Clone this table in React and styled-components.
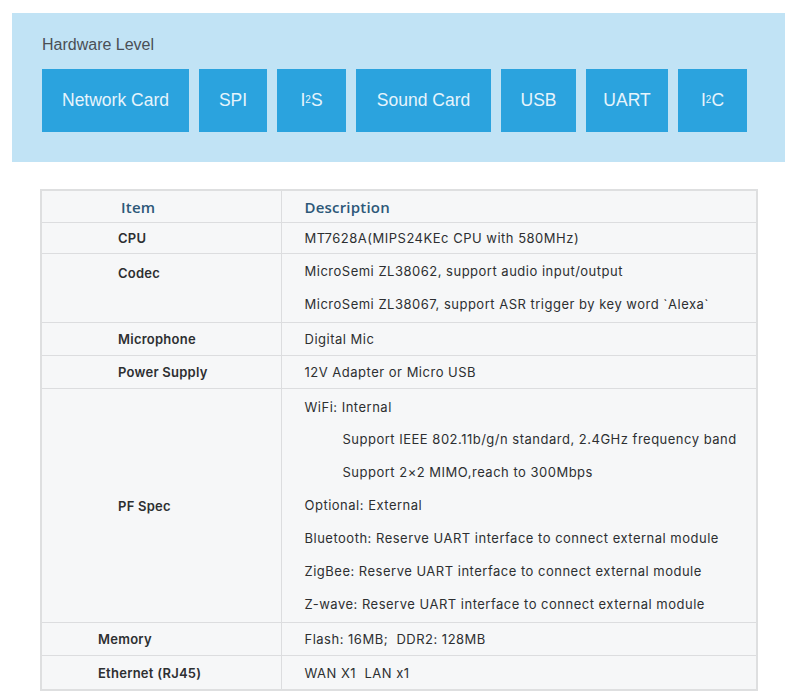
import React from "react";
import styled, { createGlobalStyle } from "styled-components";

const Global = createGlobalStyle`
  html, body { margin: 0; padding: 0; background: #ffffff; }
  body { font-family: Inter, "Noto Sans", sans-serif; }
`;

const Page = styled.div`
  width: 800px;
  height: 700px;
  padding: 13px 0 0 12px;
  box-sizing: border-box;
  overflow: hidden;
`;

const Panel = styled.section`
  width: 773px;
  height: 149px;
  box-sizing: border-box;
  background: #c1e3f5;
  padding: 22px 30px 0 30px;
`;

const PanelTitle = styled.div`
  font-family: "Liberation Sans", Arial, sans-serif;
  font-size: 16px;
  color: #4a4f55;
  line-height: 20px;
  height: 20px;
  margin-bottom: 14px;
`;

const BoxRow = styled.div`
  display: flex;
  gap: 10px;
`;

const Box = styled.div`
  height: 63px;
  width: ${(p) => p.$w}px;
  box-sizing: border-box;
  background: #2ba3de;
  color: #e6f4fc;
  font-family: "Liberation Sans", Arial, sans-serif;
  font-size: 17.5px;
  display: flex;
  align-items: center;
  justify-content: center;
  sup {
    font-size: 10px;
    position: relative;
    top: -1px;
    vertical-align: top;
    line-height: 14px;
  }
`;

const TableWrap = styled.div`
  margin: 27px 0 0 28px;
  width: 718px;
`;

const Table = styled.table`
  border-collapse: collapse;
  width: 718px;
  table-layout: fixed;
  background: #f6f7f8;
  border: 2px solid #dedfe0;
  font-family: Inter, "Noto Sans", sans-serif;
  font-size: 13px;
  letter-spacing: 0.5px;
  color: #2d2f31;
`;

const Th = styled.th`
  text-align: left;
  font-family: "Open Sans", sans-serif;
  font-weight: 600;
  font-size: 15px;
  letter-spacing: 0.2px;
  color: #2d5878;
  height: 31px;
  padding: 0 0 0 ${(p) => p.$pl}px;
  border: 1px solid #dcdddf;
  border-top: none;
`;

const ItemCell = styled.td`
  font-weight: 600;
  font-size: 13px;
  letter-spacing: 0.25px;
  padding: ${(p) => (p.$top ? "2px" : "0")} 0 0 ${(p) => p.$pl || 76}px;
  line-height: ${(p) => (p.$top ? "34px" : "normal")};
  height: ${(p) => p.$h}px;
  border: 1px solid #dcdddf;
  vertical-align: ${(p) => (p.$top ? "top" : "middle")};
`;

const DescCell = styled.td`
  padding: 0 0 0 23px;
  border: 1px solid #dcdddf;
  vertical-align: middle;
`;

const Line = styled.div`
  height: ${(p) => p.$h || 30}px;
  line-height: ${(p) => p.$h || 30}px;
  padding-left: ${(p) => (p.$indent ? 38 : 0)}px;
  white-space: nowrap;
`;

const boxes = [
  { w: 147, label: "Network Card" },
  { w: 68, label: "SPI" },
  { w: 69, label: <>I<sup>2</sup>S</> },
  { w: 135, label: "Sound Card" },
  { w: 75, label: "USB" },
  { w: 82, label: "UART" },
  { w: 69, label: <>I<sup>2</sup>C</> },
];

const rows = [
  { item: "CPU", h: 30, lines: [{ t: "MT7628A(MIPS24KEc CPU with 580MHz)", h: 28 }] },
  {
    item: "Codec",
    h: 66,
    top: true,
    lines: [
      { t: "MicroSemi ZL38062, support audio input/output", h: 33 },
      { t: "MicroSemi ZL38067, support ASR trigger by key word `Alexa`", h: 33 },
    ],
  },
  { item: "Microphone", h: 32, lines: [{ t: "Digital Mic" }] },
  { item: "Power Supply", h: 32, lines: [{ t: "12V Adapter or Micro USB" }] },
  {
    item: "PF Spec",
    h: 233,
    lines: [
      { t: "WiFi: Internal", h: 32.5 },
      { t: "Support IEEE 802.11b/g/n standard, 2.4GHz frequency band", indent: true, h: 33 },
      { t: "Support 2×2 MIMO,reach to 300Mbps", indent: true, h: 33 },
      { t: "Optional: External", h: 33 },
      { t: "Bluetooth: Reserve UART interface to connect external module", h: 33 },
      { t: "ZigBee: Reserve UART interface to connect external module", h: 33 },
      { t: "Z-wave: Reserve UART interface to connect external module", h: 32.5 },
    ],
  },
  { item: "Memory", h: 32, pl: 56, lines: [{ t: "Flash: 16MB;  DDR2: 128MB" }] },
  { item: "Ethernet (RJ45)", h: 33, pl: 56, lines: [{ t: "WAN X1  LAN x1" }] },
];

export default function App() {
  return (
    <Page>
      <Global />
      <Panel>
        <PanelTitle>Hardware Level</PanelTitle>
        <BoxRow>
          {boxes.map((b, i) => (
            <Box key={i} $w={b.w}>
              {b.label}
            </Box>
          ))}
        </BoxRow>
      </Panel>
      <TableWrap>
        <Table>
          <colgroup>
            <col style={{ width: 240 }} />
            <col />
          </colgroup>
          <thead>
            <tr>
              <Th $pl={79}>Item</Th>
              <Th $pl={23}>Description</Th>
            </tr>
          </thead>
          <tbody>
            {rows.map((r) => (
              <tr key={r.item}>
                <ItemCell $h={r.h} $pl={r.pl} $top={r.top}>
                  {r.item}
                </ItemCell>
                <DescCell>
                  {r.lines.map((l, i) => (
                    <Line key={i} $h={l.h} $indent={l.indent}>
                      {l.t.replace(/  /g, "\u00a0 ")}
                    </Line>
                  ))}
                </DescCell>
              </tr>
            ))}
          </tbody>
        </Table>
      </TableWrap>
    </Page>
  );
}
